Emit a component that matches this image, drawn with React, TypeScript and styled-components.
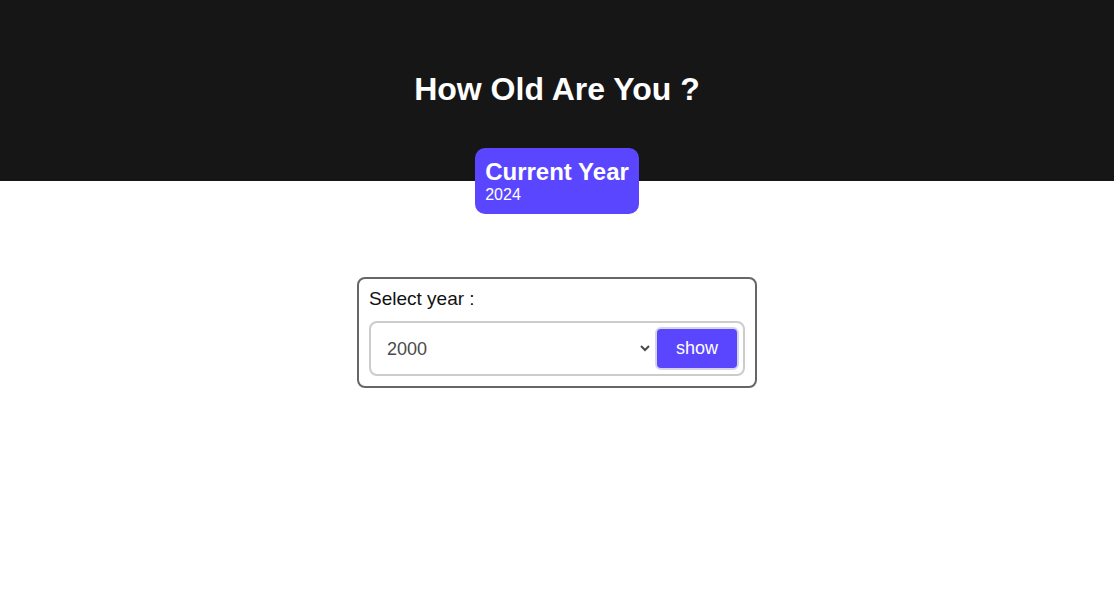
import { useState } from "react";
import styled, { createGlobalStyle } from "styled-components";

// page reset and base font
const GlobalStyle = createGlobalStyle`
    body {
        margin: 0;
        background: #ffffff;
        font-family: "Liberation Sans", Arial, sans-serif;
    }
`;

const Page = styled.div`
    display: flex;
    flex-direction: column;
    align-items: center;
    min-height: 605px;
`;

// dark band at the top holding the title
const Header = styled.header`
    align-self: stretch;
    height: 181px;
    box-sizing: border-box;
    padding-top: 71px;
    background-color: #161616;
    text-align: center;
`;

const Title = styled.h1`
    margin: 0;
    font-size: 32px;
    font-weight: 700;
    color: #ffffff;
`;

// purple badge that hangs over the header edge
const YearBadge = styled.div`
    margin-top: -33px;
    padding: 10px 10px;
    border-radius: 10px;
    background-color: #5a46ff;
    color: #ffffff;
`;

const BadgeTitle = styled.div`
    font-size: 24px;
    font-weight: 700;
`;

const BadgeYear = styled.div`
    font-size: 16px;
`;

// box with the year picker
const PickerCard = styled.div`
    margin-top: 63px;
    width: 400px;
    box-sizing: border-box;
    padding: 9px 10px 10px;
    border: 2px solid #666666;
    border-radius: 8px;
`;

const Label = styled.label`
    display: block;
    font-size: 19px;
    line-height: 22px;
    color: #111111;
`;

const PickerRow = styled.div`
    display: flex;
    align-items: stretch;
    margin-top: 11px;
    height: 55px;
    box-sizing: border-box;
    padding: 4px;
    border: 2px solid #cccccc;
    border-radius: 8px;
`;

const YearSelect = styled.select`
    flex: 1;
    min-width: 0;
    padding-left: 8px;
    border: none;
    outline: none;
    background: transparent;
    font-family: "Liberation Sans", Arial, sans-serif;
    font-size: 18px;
    color: #4a4a4a;
`;

const ShowButton = styled.button`
    flex: 0 0 84px;
    margin-left: 2px;
    border: 2px solid #d4d4e8;
    border-radius: 6px;
    background-color: #5a46ff;
    color: #ffffff;
    font-family: "Liberation Sans", Arial, sans-serif;
    font-size: 18px;
    cursor: pointer;
`;

const years = Array.from({ length: 125 }, (_, i) => 2024 - i);

export default function App() {
    const [year, setYear] = useState("2000");

    return (
        <Page>
            <GlobalStyle />
            <Header>
                <Title>How Old Are You ?</Title>
            </Header>

            <YearBadge>
                <BadgeTitle>Current Year</BadgeTitle>
                <BadgeYear>2024</BadgeYear>
            </YearBadge>

            <PickerCard>
                <Label htmlFor="year">Select year :</Label>
                <PickerRow>
                    <YearSelect
                        id="year"
                        value={year}
                        onChange={(e) => setYear(e.target.value)}
                    >
                        {years.map((y) => (
                            <option key={y} value={y}>
                                {y}
                            </option>
                        ))}
                    </YearSelect>
                    <ShowButton>show</ShowButton>
                </PickerRow>
            </PickerCard>
        </Page>
    );
}
